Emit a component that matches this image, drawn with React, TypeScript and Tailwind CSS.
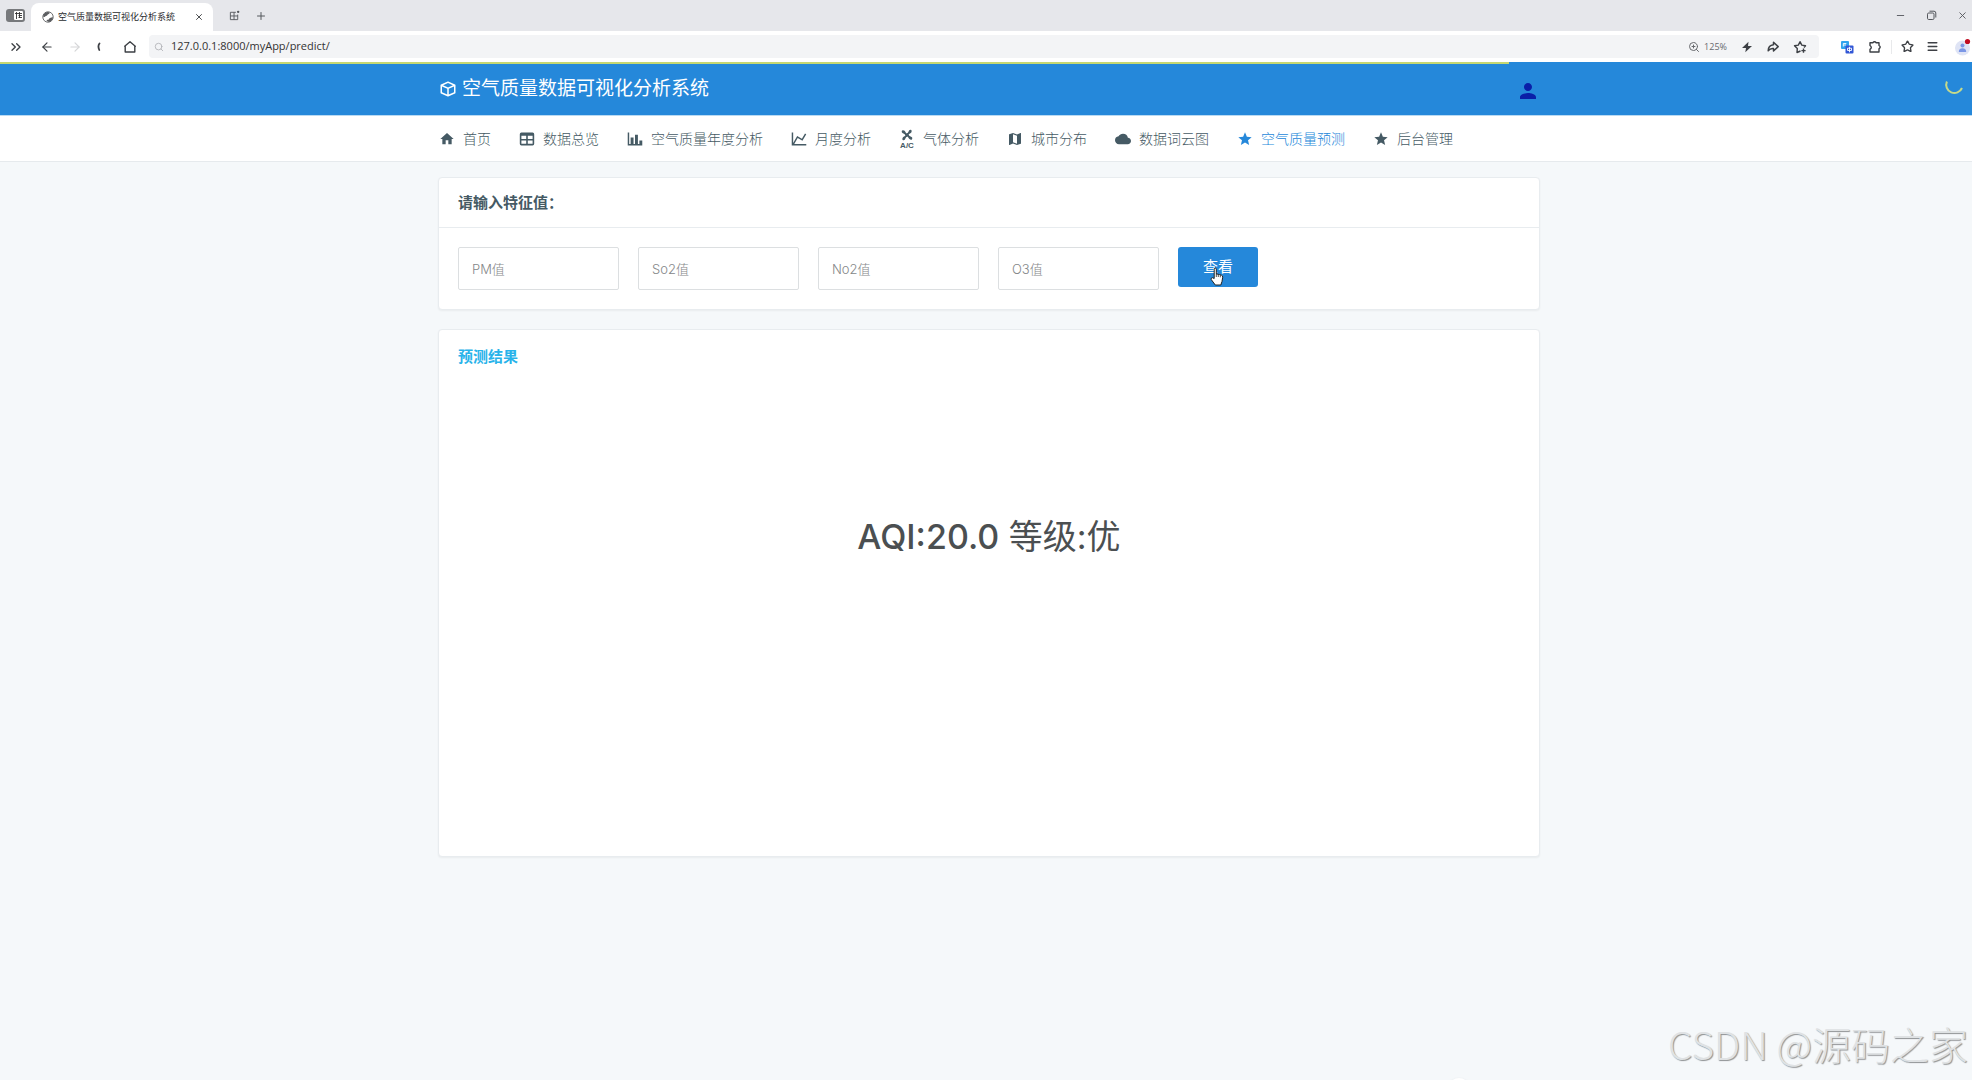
import React, { useState } from 'react';
import { BiCube } from 'react-icons/bi';
import { MdCloud, MdHome, MdMap, MdPerson, MdStar } from 'react-icons/md';
import {
  ArrowLeft,
  ArrowRight,
  ChevronsRight,
  Menu,
  Minus,
  Plus,
  Search,
  Star,
  X,
  ZoomIn,
} from 'lucide-react';

const TableIcon = ({ className }: { className?: string }) => (
  <svg viewBox="2 2 20 20" fill="currentColor" className={className}>
    <path d="M5,4H19A2,2 0 0,1 21,6V18A2,2 0 0,1 19,20H5A2,2 0 0,1 3,18V6A2,2 0 0,1 5,4M5,8V12H11V8H5M13,8V12H19V8H13M5,14V18H11V14H5M13,14V18H19V14H13Z" />
  </svg>
);

const BarIcon = ({ className }: { className?: string }) => (
  <svg viewBox="1 1 22 22" fill="currentColor" className={className}>
    <path d="M22,21H2V3H4V19H6V10H10V19H12V6H16V19H18V14H22V21Z" />
  </svg>
);

const LineIcon = ({ className }: { className?: string }) => (
  <svg viewBox="1 1 22 22" fill="currentColor" className={className}>
    <path d="M16,11.78L20.24,4.45L21.97,5.45L16.74,14.5L10.23,10.75L5.46,19H22V21H2V3H4V17.54L9.5,8L16,11.78Z" />
  </svg>
);

const AirIcon = ({ className }: { className?: string }) => (
  <svg viewBox="0 0 16 16" fill="currentColor" className={className} overflow="visible">
    <g transform="translate(8 4)">
      <circle r="1.8" />
      <path d="M0 1L-1.2 -2.6Q-2.6 -5.4 -5 -4.4Q-6 -2.2 -3.6 -1.6Q-2.4 -1.4 -1 1Z" />
      <path d="M0 1L-1.2 -2.6Q-2.6 -5.4 -5 -4.4Q-6 -2.2 -3.6 -1.6Q-2.4 -1.4 -1 1Z" transform="rotate(90)" />
      <path d="M0 1L-1.2 -2.6Q-2.6 -5.4 -5 -4.4Q-6 -2.2 -3.6 -1.6Q-2.4 -1.4 -1 1Z" transform="rotate(180)" />
      <path d="M0 1L-1.2 -2.6Q-2.6 -5.4 -5 -4.4Q-6 -2.2 -3.6 -1.6Q-2.4 -1.4 -1 1Z" transform="rotate(270)" />
    </g>
    <text x="8" y="17" textAnchor="middle" fontSize="8" fontWeight="700" fontFamily="Liberation Sans, sans-serif">A/C</text>
  </svg>
);

const navItems = [
  { label: '首页', icon: MdHome },
  { label: '数据总览', icon: TableIcon },
  { label: '空气质量年度分析', icon: BarIcon },
  { label: '月度分析', icon: LineIcon },
  { label: '气体分析', icon: AirIcon },
  { label: '城市分布', icon: MdMap },
  { label: '数据词云图', icon: MdCloud },
  { label: '空气质量预测', icon: MdStar, active: true },
  { label: '后台管理', icon: MdStar },
];

const fields = [
  { name: 'pm', placeholder: 'PM值' },
  { name: 'so2', placeholder: 'So2值' },
  { name: 'no2', placeholder: 'No2值' },
  { name: 'o3', placeholder: 'O3值' },
];

const TabStrip = () => (
  <div className="flex h-[31px] items-end bg-[#e6e7eb] text-[#55585d]">
    <button aria-label="侧边栏" className="mb-[9px] ml-[6px] flex h-[13px] w-[19px] items-center justify-end rounded-[3px] bg-[#77797c] p-[2px]">
      <svg viewBox="0 0 9 9" className="h-[9px] w-[9px]">
        <rect width="9" height="9" rx="1" fill="#fff" />
        <path d="M1 2.5H8M2.5 1V8M4.5 4.5H8M4.5 6.5H8M5.5 1V7" stroke="#333" strokeWidth=".9" />
      </svg>
    </button>
    <div className="ml-[6px] flex h-7 w-[182px] items-center rounded-t-lg bg-white pl-[11px] text-[#2a2c2f]">
      <svg viewBox="0 0 12 12" className="h-3 w-3 shrink-0">
        <circle cx="6" cy="6" r="5.2" fill="#fff" stroke="#5b5d60" strokeWidth=".9" />
        <path d="M1 5.5Q1.5 1.5 5.5 .9Q7.5 .9 7.8 1.8Q7.5 3.2 5.8 3.4Q5 5 3.6 5Q3 6.5 1 5.5ZM11 6.2Q10.6 10 7 11Q5 10.5 4.4 9Q5.5 8.6 6.5 8.8Q7.2 6.4 11 6.2Z" fill="#5b5d60" />
      </svg>
      <span className="ml-1 flex-1 whitespace-nowrap text-[9px]">空气质量数据可视化分析系统</span>
      <button aria-label="关闭标签页" className="mr-[9px]">
        <X className="h-[10px] w-[10px]" />
      </button>
    </div>
    <button aria-label="标签组" className="mb-[10px] ml-4">
      <svg viewBox="0 0 12 12" fill="none" stroke="currentColor" className="h-[11px] w-[11px]">
        <path d="M7.5 2.5H1.5V10.5H9.5V5M5.5 2.5V10.5M1.5 6.5H9.5" />
        <circle cx="10" cy="2" r="1.3" fill="currentColor" stroke="none" />
      </svg>
    </button>
    <button aria-label="新标签页" className="mb-[9px] ml-[15px]">
      <Plus className="h-3 w-3" />
    </button>
    <div className="mb-[10px] ml-auto mr-1 flex items-center gap-5">
      <button aria-label="最小化"><Minus className="h-[11px] w-[11px]" /></button>
      <button aria-label="还原">
        <svg viewBox="0 0 11 11" fill="none" stroke="currentColor" className="h-[11px] w-[11px]">
          <rect x="1.5" y="3" width="6.5" height="6.5" rx="1.2" />
          <path d="M3.5 1.2H8Q9.8 1.2 9.8 3V7.5" />
        </svg>
      </button>
      <button aria-label="关闭"><X className="h-[11px] w-[11px]" /></button>
    </div>
  </div>
);

const Toolbar = () => (
  <div className="flex h-[31px] items-center bg-white text-[#3d4045]">
    <button aria-label="展开" className="ml-2"><ChevronsRight className="h-4 w-4" /></button>
    <button aria-label="后退" className="ml-4"><ArrowLeft className="h-[14px] w-[14px]" /></button>
    <button aria-label="前进" className="ml-[14px] text-[#d5d6d8]"><ArrowRight className="h-[14px] w-[14px]" /></button>
    <button aria-label="停止加载" className="ml-[11px]">
      <svg viewBox="0 0 12 12" fill="none" stroke="currentColor" strokeWidth="1.8" strokeLinecap="round" className="h-3 w-3">
        <path d="M6.5 2.5Q4.5 5 6.3 9" />
      </svg>
    </button>
    <button aria-label="主页" className="ml-[18px]">
      <svg viewBox="0 0 14 14" fill="none" stroke="currentColor" strokeWidth="1.4" strokeLinejoin="round" className="h-[14px] w-[14px]">
        <path d="M7 1.8L12.3 6.3H11.8V12H2.2V6.3H1.7Z" />
      </svg>
    </button>
    <div className="ml-3 mr-[21px] flex h-[23px] flex-1 items-center rounded bg-[#f3f4f6] pl-[5px] pr-3">
      <Search className="h-[10px] w-[10px] text-[#aeb0b4]" />
      <input
        aria-label="地址栏"
        defaultValue="127.0.0.1:8000/myApp/predict/"
        className="ml-[7px] min-w-0 flex-1 bg-transparent font-['Open_Sans',sans-serif] text-[11px] text-[#333] outline-none"
      />
      <ZoomIn className="h-3 w-3 text-[#686a6e]" />
      <span className="ml-1 font-['Open_Sans',sans-serif] text-[9px] text-[#686a6e]">125%</span>
      <button aria-label="极速模式" className="ml-[14px]">
        <svg viewBox="0 0 12 12" fill="currentColor" className="h-3 w-3">
          <path d="M7.5 .8L1 7H5L4.3 11.2L11 5H7Z" />
        </svg>
      </button>
      <button aria-label="分享" className="ml-[14px]">
        <svg viewBox="0 0 12 12" fill="none" stroke="currentColor" strokeWidth="1.5" strokeLinejoin="round" className="h-3 w-3">
          <path d="M6.5 1.2L11.2 5.6L6.5 10V7.6Q3.2 7.2 1.2 9.8Q1.2 4.2 6.5 3.7Z" />
        </svg>
      </button>
      <button aria-label="收藏" className="ml-[14px]">
        <svg viewBox="0 0 14 14" fill="none" stroke="currentColor" strokeWidth="1.4" strokeLinejoin="round" className="h-[14px] w-[14px]">
          <path d="M7.5 11L4 12.5L4.3 8.6L1.5 5.8L5.3 5.1L7 1.7L8.8 5.1L12.5 5.8L11 7.4M10.5 8.5V12.7M8.4 10.6H12.6" />
        </svg>
      </button>
    </div>
    <button aria-label="翻译">
      <svg viewBox="0 0 14 14" className="h-[14px] w-[14px]">
        <rect x="1" y="1" width="8" height="8" rx="1" fill="#2fa4ee" />
        <path d="M3.3 6.5V3.5H6.3M3.3 5H6" stroke="#fff" fill="none" strokeWidth=".9" />
        <rect x="5.5" y="5.5" width="8" height="8" rx="1" fill="#3257d6" />
        <path d="M7.5 8.2H11.5V10.5H7.5ZM9.5 6.8V12.3" stroke="#fff" fill="none" strokeWidth=".9" />
      </svg>
    </button>
    <button aria-label="扩展" className="ml-[14px]">
      <svg viewBox="0 0 14 14" fill="none" stroke="currentColor" strokeWidth="1.4" strokeLinejoin="round" className="h-[14px] w-[14px]">
        <path d="M2 2.8H4.8Q6.5 .6 8.2 2.8H11V5.5Q13.4 7 11 8.8V12H2V9.3Q4.6 7.5 2 5.5Z" />
      </svg>
    </button>
    <span className="ml-[9px] h-[14px] w-px bg-[#e8e9eb]" />
    <button aria-label="收藏夹" className="ml-[9px]"><Star className="h-[13px] w-[13px]" strokeWidth={2.5} /></button>
    <button aria-label="菜单" className="ml-3"><Menu className="h-[13px] w-[13px]" strokeWidth={2.5} /></button>
    <button aria-label="账户" className="ml-4 mr-px">
      <svg viewBox="0 0 16 18" className="h-[18px] w-4">
        <circle cx="7.5" cy="10" r="7.5" fill="#dfe4f5" />
        <circle cx="7.5" cy="7.5" r="2" fill="#7b97e6" />
        <path d="M3.8 14Q3.8 10.3 7.5 10.3T11.2 14Z" fill="#7b97e6" />
        <circle cx="12.5" cy="3.5" r="2.6" fill="#c00c22" />
      </svg>
    </button>
  </div>
);

const App: React.FC = () => {
  const [values, setValues] = useState<Record<string, string>>({});

  return (
    <div className="relative flex min-h-screen flex-col overflow-hidden bg-[#f5f8fa] font-['Inter','Noto_Sans_CJK_SC',sans-serif] text-[#455a64]">
      <TabStrip />
      <Toolbar />

      <header className="relative h-[54px] border-b border-[#b9daf3] bg-[#2588da] pl-1.5">
        {/* page loading progress */}
        <div className="absolute left-0 top-0 h-[2px] w-[76.5%] bg-[#c5d772]" />
        <svg viewBox="0 0 20 20" fill="none" stroke="#c5d98a" strokeWidth="2" className="absolute right-2 top-[14px] h-5 w-5">
          <path d="M2.9 5.5A8 8 0 1 0 18 12" />
        </svg>
        <div className="mx-auto flex h-full max-w-[1102px] items-center justify-between">
          <h1 className="flex items-center gap-[5px] pl-px text-[19px] leading-6 text-white">
            <BiCube className="h-[18px] w-[18px]" />
            空气质量数据可视化分析系统
          </h1>
          <button aria-label="用户" className="pt-1 text-[#0a1fa8]">
            <MdPerson className="h-6 w-6" />
          </button>
        </div>
      </header>

      <nav className="border-b border-[#e6eaed] bg-white pl-1.5">
        <ul className="mx-auto flex h-[45px] max-w-[1102px] items-center gap-7 pl-px text-sm font-light">
          {navItems.map(({ label, icon: Icon, active }) => (
            <li key={label}>
              <a href="#" className={active ? 'flex items-center gap-2 whitespace-nowrap text-[#2588da]' : 'flex items-center gap-2 whitespace-nowrap'}>
                <Icon className="h-4 w-4 shrink-0" />
                {label}
              </a>
            </li>
          ))}
        </ul>
      </nav>

      <main className="pl-1.5 pt-[15px]">
        <div className="mx-auto flex max-w-[1102px] flex-col gap-[19px]">
          <section className="rounded-sm border border-[#e8ecef] bg-white shadow-xs">
            <h2 className="border-b border-[#e8ecef] px-[19px] py-3 text-[15px] font-bold leading-[25px]">请输入特征值：</h2>
            <form className="flex items-start gap-[19px] p-[19px]" onSubmit={(e) => e.preventDefault()}>
              {fields.map((f) => (
                <input
                  key={f.name}
                  name={f.name}
                  aria-label={f.placeholder}
                  placeholder={f.placeholder}
                  value={values[f.name] || ''}
                  onChange={(e) => setValues({ ...values, [f.name]: e.target.value })}
                  className="h-[43px] w-[161px] rounded-xs border border-[#dcdfe1] bg-white px-[13px] text-[13px] font-light outline-none placeholder:text-[#858789]"
                />
              ))}
              <button type="submit" className="relative h-10 w-20 rounded-[3px] bg-[#2588da] text-[15px] text-white">
                查看
                <svg viewBox="0 0 14 19" className="absolute left-8 top-5 h-[19px] w-[14px]">
                  <path
                    d="M4.2 11.5V2.2Q4.2 1 5.2 1T6.3 2.2V7L8 7.2L9.7 7.6L11.3 8.1Q12.8 8.6 12.7 10.2L12 14.5L10.8 18H5.3L1.2 12.5Q.8 10.8 2.5 10.7Z"
                    fill="#fff"
                    stroke="#222"
                    strokeWidth="1"
                    strokeLinejoin="round"
                  />
                  <path d="M6.3 7V10M8.3 7.5V10M10.3 8V10.3" stroke="#222" strokeWidth=".8" />
                </svg>
              </button>
            </form>
          </section>

          <section className="flex min-h-[528px] flex-col rounded-sm border border-[#e8ecef] bg-white p-[19px] shadow-xs">
            <h2 className="text-[15px] font-bold leading-4 text-[#28b3ea]">预测结果</h2>
            <p className="pt-[140px] text-center text-[34px] leading-[64px] text-[#4b4f51]">
              <span className="font-medium">AQI:20.0</span> 等级:优
            </p>
          </section>
        </div>
      </main>

      <div className="absolute -bottom-5 left-[74%] h-[22px] w-[22px] -translate-x-1/2 rounded-full bg-white shadow" />
      <div className="absolute bottom-2 right-1 font-['Noto_Sans_CJK_SC',sans-serif] text-[39px] font-light text-[#dfe2e4] [text-shadow:1px_1px_1px_#8f9294]">
        CSDN @源码之家
      </div>
    </div>
  );
};

export default App;
